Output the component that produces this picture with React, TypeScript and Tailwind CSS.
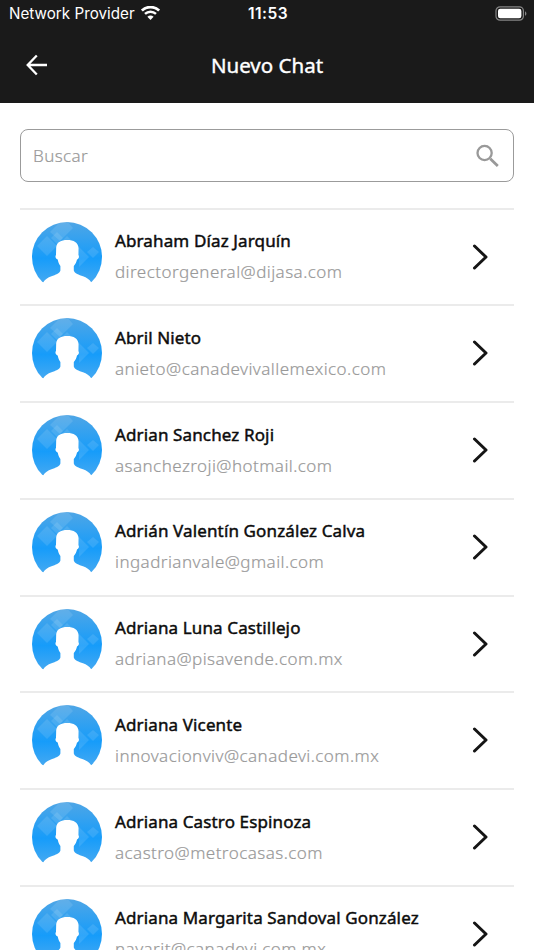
interface Contact {
  name: string;
  email: string;
}

const contacts: Contact[] = [
  { name: "Abraham Díaz Jarquín", email: "directorgeneral@dijasa.com" },
  { name: "Abril Nieto", email: "anieto@canadevivallemexico.com" },
  { name: "Adrian Sanchez Roji", email: "asanchezroji@hotmail.com" },
  { name: "Adrián Valentín González Calva", email: "ingadrianvale@gmail.com" },
  { name: "Adriana Luna Castillejo", email: "adriana@pisavende.com.mx" },
  { name: "Adriana Vicente", email: "innovacionviv@canadevi.com.mx" },
  { name: "Adriana Castro Espinoza", email: "acastro@metrocasas.com" },
  { name: "Adriana Margarita Sandoval González", email: "nayarit@canadevi.com.mx" },
];

function StatusBar() {
  return (
    <div className="grid h-[27px] grid-cols-[1fr_auto_1fr] items-center pl-[9px] pr-[7px] font-['Inter',sans-serif] text-white">
      <div className="flex items-center gap-[6px] pt-px">
        <span className="text-[15.2px] leading-none tracking-[0.02px]">Network Provider</span>
        <svg className="-mt-[2px]" width="19" height="14" viewBox="0 0 19 14" fill="none" stroke="white">
          <path d="M.9 4.6C5.6-.1 13.4-.1 18.1 4.6" strokeWidth="2.7" />
          <path d="M4 7.9C7.1 5 11.9 5 15 7.9" strokeWidth="2.5" />
          <path d="M9.5 13.9 6.4 10.8C8.1 9.1 10.9 9.1 12.6 10.8Z" fill="white" stroke="none" />
        </svg>
      </div>
      <span className="pt-px text-[15.5px] font-semibold leading-none tracking-[0.5px]">11:53</span>
      <svg className="justify-self-end" width="32" height="15" viewBox="0 0 32 15">
        <rect x="1" y="0.8" width="27.4" height="13.4" rx="4" fill="none" stroke="#858585" strokeWidth="1.2" />
        <rect x="3" y="2.7" width="23.4" height="9.6" rx="2.2" fill="white" />
        <path d="M30 5.2v4.6c1.9-.8 1.9-3.8 0-4.6Z" fill="#858585" />
      </svg>
    </div>
  );
}

function Header() {
  return (
    <header className="h-[103px] shrink-0 bg-[#1a1a1a]">
      <StatusBar />
      <div className="grid h-[76px] grid-cols-[1fr_auto_1fr] items-center px-[26px]">
        <button type="button" aria-label="Volver">
          <svg width="22" height="22" viewBox="0 0 22 22" fill="none" stroke="white" strokeWidth="2.3">
            <path d="M21 11H2M10.8 1.5 1.7 11 10.8 20.5" />
          </svg>
        </button>
        <h1 className="text-[20.5px] leading-7 text-white [-webkit-text-stroke:0.4px_#fff]">Nuevo Chat</h1>
      </div>
    </header>
  );
}

function SearchBox() {
  return (
    <div className="flex h-[53px] shrink-0 items-center justify-between rounded-[8px] border-[1.4px] border-[#9b9b9b] pl-3 pr-[14px]">
      <input
        type="text"
        placeholder="Buscar"
        className="w-[300px] text-[17px] font-light tracking-[0.4px] outline-none [-webkit-text-stroke:0.2px_#999] placeholder:text-[#999]"
      />
      <svg width="24" height="24" viewBox="0 0 24 24" fill="none" stroke="#999" strokeWidth="2.3">
        <circle cx="9.6" cy="9" r="7.1" />
        <path d="m15.3 14.8 7.5 7.3" strokeWidth="2.8" />
      </svg>
    </div>
  );
}

function Avatar() {
  return (
    <svg className="shrink-0" width="70" height="70" viewBox="0 0 70 70">
      <defs>
        <linearGradient id="sky" gradientUnits="userSpaceOnUse" x1="0" y1="0" x2="0" y2="70">
          <stop offset="0" stopColor="#4fa6e6" />
          <stop offset="0.52" stopColor="#169cfa" />
          <stop offset="0.85" stopColor="#42a8f2" />
        </linearGradient>
        <clipPath id="disc">
          <circle cx="35" cy="35" r="35" />
        </clipPath>
        {/* everything around the head and shoulders */}
        <clipPath id="backdrop">
          <path d="M0 0H70V60.2H59.2C57.5 57.5 54.5 55.5 51 54.2 47 52.8 42.5 51.5 41.8 48.5V44C43.5 42 44.5 40 45 37.5 46.5 37 47.6 35 46.5 33L46.6 26C46 20.5 42 18 35 18 29 18 25 20 24.2 25L24 33C22.7 34.5 24 37 25.7 37.5 26.2 40 27 42 28.4 44V48.5C27.7 51.5 23.5 52.8 19.5 54.2 15.8 55.5 13 57.5 11.3 60.2H0Z" />
        </clipPath>
      </defs>
      <g clipPath="url(#disc)">
        <g clipPath="url(#backdrop)">
          <path d="M0 0h70v70H0Z" fill="url(#sky)" />
          <g fill="white" fillOpacity="0.11">
            <path d="M18 10 32-4 41 6 28 19Z" />
            <path d="M5 24 15 14 25 24 15 34Z" />
            <path d="m19 16 6-6 6 6-6 6Z" />
            <path d="m29 20 6-6 6 6Z" />
            <path d="m47 25 10 10-10 10Z" />
            <path d="m55 30 6-5 6 5-6 6Z" />
          </g>
        </g>
      </g>
    </svg>
  );
}

function ContactRow({ name, email }: Contact) {
  return (
    <li className="flex h-[96.75px] shrink-0 items-start border-t-2 border-[#ebebeb] pl-[12.3px] pr-[26px] pt-[12px]">
      <Avatar />
      <div className="ml-[12.7px] min-w-0 flex-1 whitespace-nowrap pt-[6.4px]">
        <p className="text-[17px] leading-[26px] tracking-[0.13px] text-[#0c0c0c] [-webkit-text-stroke:0.45px_#0c0c0c]">{name}</p>
        <p className="mt-[5px] text-[17px] font-light leading-[26px] tracking-[0.45px] text-[#999] [-webkit-text-stroke:0.2px_#999]">{email}</p>
      </div>
      <svg className="mt-[22px] shrink-0" width="16" height="26" viewBox="0 0 16 26" fill="none" stroke="#151515" strokeWidth="3" strokeLinecap="round" strokeLinejoin="round">
        <path d="M2.5 2 14 13 2.5 24" />
      </svg>
    </li>
  );
}

export default function App() {
  return (
    <div className="flex h-[950px] w-[534px] flex-col overflow-hidden bg-white font-['Noto_Sans',sans-serif]">
      <Header />
      <main className="flex flex-col px-5 pt-[26px]">
        <SearchBox />
        <ul className="mt-[25.7px] flex flex-col">
          {contacts.map((contact) => (
            <ContactRow key={contact.email} {...contact} />
          ))}
        </ul>
      </main>
    </div>
  );
}
